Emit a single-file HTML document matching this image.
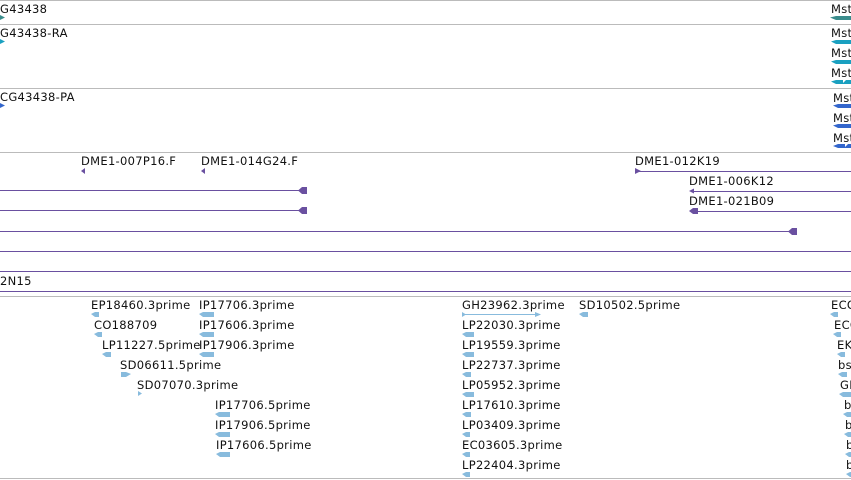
<!DOCTYPE html>
<html><head><meta charset="utf-8"><style>
html,body{margin:0;padding:0;width:851px;height:480px;overflow:hidden;background:#fff;position:relative}
.t{position:absolute;font:11.5px "DejaVu Sans","Liberation Sans",sans-serif;color:#111;white-space:nowrap;line-height:12px;letter-spacing:0.3px;margin-top:1px}
.h{position:absolute;left:0;width:851px;height:1px;background:#bbb}
.p{position:absolute;height:1px;background:#6a50a0}
svg{position:absolute;left:0;top:0}
</style></head><body>
<div class="h" style="top:0"></div>
<div class="h" style="top:24px"></div>
<div class="h" style="top:88px"></div>
<div class="h" style="top:152px"></div>
<div class="h" style="top:296px"></div>
<div class="h" style="top:478px"></div>

<div class="t" style="left:0;top:2px">G43438</div>
<div class="t" style="left:0;top:26px">G43438-RA</div>
<div class="t" style="left:0;top:90px">CG43438-PA</div>
<div class="t" style="left:831px;top:2px">Mst</div>
<div class="t" style="left:831px;top:26px">Mst</div>
<div class="t" style="left:831px;top:46px">Mst</div>
<div class="t" style="left:831px;top:66px">Mst</div>
<div class="t" style="left:833px;top:91px">Mst</div>
<div class="t" style="left:833px;top:111px">Mst</div>
<div class="t" style="left:833px;top:131px">Mst</div>

<div class="t" style="left:81px;top:154px">DME1-007P16.F</div>
<div class="t" style="left:201px;top:154px">DME1-014G24.F</div>
<div class="t" style="left:635px;top:154px">DME1-012K19</div>
<div class="t" style="left:689px;top:174px">DME1-006K12</div>
<div class="t" style="left:689px;top:194px">DME1-021B09</div>
<div class="t" style="left:0;top:274px">2N15</div>

<div class="p" style="left:0;top:190px;width:300px"></div>
<div class="p" style="left:0;top:210px;width:300px"></div>
<div class="p" style="left:0;top:231px;width:790px"></div>
<div class="p" style="left:0;top:251px;width:851px"></div>
<div class="p" style="left:0;top:271px;width:851px"></div>
<div class="p" style="left:0;top:291px;width:851px"></div>
<div class="p" style="left:637px;top:171px;width:214px"></div>
<div class="p" style="left:691px;top:191px;width:160px"></div>
<div class="p" style="left:691px;top:211px;width:160px"></div>

<div class="t" style="left:91px;top:298px">EP18460.3prime</div>
<div class="t" style="left:94px;top:318px">CO188709</div>
<div class="t" style="left:102px;top:338px">LP11227.5prime</div>
<div class="t" style="left:120px;top:358px">SD06611.5prime</div>
<div class="t" style="left:137px;top:378px">SD07070.3prime</div>
<div class="t" style="left:199px;top:298px">IP17706.3prime</div>
<div class="t" style="left:199px;top:318px">IP17606.3prime</div>
<div class="t" style="left:199px;top:338px">IP17906.3prime</div>
<div class="t" style="left:215px;top:398px">IP17706.5prime</div>
<div class="t" style="left:215px;top:418px">IP17906.5prime</div>
<div class="t" style="left:216px;top:438px">IP17606.5prime</div>
<div class="t" style="left:462px;top:298px">GH23962.3prime</div>
<div class="t" style="left:462px;top:318px">LP22030.3prime</div>
<div class="t" style="left:462px;top:338px">LP19559.3prime</div>
<div class="t" style="left:462px;top:358px">LP22737.3prime</div>
<div class="t" style="left:462px;top:378px">LP05952.3prime</div>
<div class="t" style="left:462px;top:398px">LP17610.3prime</div>
<div class="t" style="left:462px;top:418px">LP03409.3prime</div>
<div class="t" style="left:462px;top:438px">EC03605.3prime</div>
<div class="t" style="left:462px;top:458px">LP22404.3prime</div>
<div class="t" style="left:579px;top:298px">SD10502.5prime</div>
<div class="t" style="left:831px;top:298px">ECO</div>
<div class="t" style="left:834px;top:318px">ECO</div>
<div class="t" style="left:837px;top:338px">EK</div>
<div class="t" style="left:838px;top:358px">bs</div>
<div class="t" style="left:840px;top:378px">GH</div>
<div class="t" style="left:844px;top:398px">b</div>
<div class="t" style="left:845px;top:418px">b</div>
<div class="t" style="left:846px;top:438px">b</div>
<div class="t" style="left:846px;top:458px">b</div>

<svg width="851" height="480">
<path d="M0 15 L5 17.5 L0 20Z" fill="#3a8c8c"/>
<path d="M0 39 L5 41.5 L0 44Z" fill="#1aa0c0"/>
<path d="M0 103 L5 105.5 L0 108Z" fill="#3366cc"/>
<path d="M830 17.5 L836 16 L851 16 L851 20 L836 20Z" fill="#3a8c8c"/>
<path d="M831 41.5 L836 40 L851 40 L851 44 L836 44Z" fill="#1aa0c0"/>
<path d="M831 61.5 L836 60 L851 60 L851 64 L836 64Z" fill="#1aa0c0"/>
<path d="M831 81.5 L836 80 L843 80 L843 83 L846 80 L851 80 L851 84 L836 84Z" fill="#1aa0c0"/>
<path d="M833 105.5 L838 104 L851 104 L851 108 L838 108Z" fill="#3366cc"/>
<path d="M833 125.5 L838 124 L851 124 L851 128 L838 128Z" fill="#3366cc"/>
<path d="M833 146 L838 144 L845 144 L845 147 L848 144 L851 144 L851 148 L838 148Z" fill="#3366cc"/>
<g fill="#6a50a0">
<path d="M81 171 L85 168 L85 174Z"/>
<path d="M201 171 L205 168 L205 174Z"/>
<path d="M298 190.5 L302 187 L307 187 L307 194 L302 194Z"/>
<path d="M298 210.5 L302 207 L307 207 L307 214 L302 214Z"/>
<path d="M788 231.5 L792 228 L797 228 L797 235 L792 235Z"/>
<path d="M635 168 L641 171 L635 174Z"/>
<path d="M689 191 L694 188.5 L694 193.5Z"/>
<path d="M689 211 L693 208 L698 208 L698 214 L693 214Z"/>
</g>
<g fill="#88bbdd">
<path d="M91 314 L95 312 L99 312 L99 317 L95 317Z"/>
<path d="M94 334 L98 332 L102 332 L102 337 L98 337Z"/>
<path d="M102 354 L106 352 L111 352 L111 357 L106 357Z"/>
<path d="M121 372 L126 372 L131 374 L126 377 L121 377Z"/>
<path d="M138 391 L142 393.5 L138 396Z"/>
<path d="M199 314 L203 312 L214 312 L214 317 L203 317Z"/>
<path d="M199 334 L203 332 L214 332 L214 337 L203 337Z"/>
<path d="M199 354 L203 352 L214 352 L214 357 L203 357Z"/>
<path d="M215 414 L219 412 L230 412 L230 417 L219 417Z"/>
<path d="M215 434 L219 432 L230 432 L230 437 L219 437Z"/>
<path d="M216 454 L220 452 L230 452 L230 457 L220 457Z"/>
<path d="M462 312 L466 314.5 L462 317Z"/>
<rect x="462" y="314" width="78" height="1"/>
<path d="M535 312 L541 314.5 L535 317Z"/>
<path d="M579 314 L583 312 L588 312 L588 317 L583 317Z"/>
<path d="M462 334 L466 332 L474 332 L474 337 L466 337Z"/>
<path d="M462 354 L466 352 L474 352 L474 357 L466 357Z"/>
<path d="M462 374 L466 372 L471 372 L471 377 L466 377Z"/>
<path d="M462 394 L466 392 L474 392 L474 397 L466 397Z"/>
<path d="M462 414 L466 412 L471 412 L471 417 L466 417Z"/>
<path d="M462 434 L466 432 L470 432 L470 437 L466 437Z"/>
<path d="M462 454 L466 452 L470 452 L470 457 L466 457Z"/>
<path d="M462 474 L466 472 L470 472 L470 477 L466 477Z"/>
<path d="M830 314 L834 312 L838 312 L838 317 L834 317Z"/>
<path d="M833 334 L837 332 L841 332 L841 337 L837 337Z"/>
<path d="M837 354 L841 352 L845 352 L845 357 L841 357Z"/>
<path d="M838 374 L842 372 L847 372 L847 377 L842 377Z"/>
<path d="M839 394 L843 392 L851 392 L851 397 L843 397Z"/>
<path d="M843 414 L847 412 L851 412 L851 417 L847 417Z"/>
<path d="M844 434 L848 432 L851 432 L851 437 L848 437Z"/>
<path d="M845 454 L849 452 L851 452 L851 457 L849 457Z"/>
<path d="M846 474 L850 472 L851 472 L851 477 L850 477Z"/>
</g>
</svg>
</body></html>
